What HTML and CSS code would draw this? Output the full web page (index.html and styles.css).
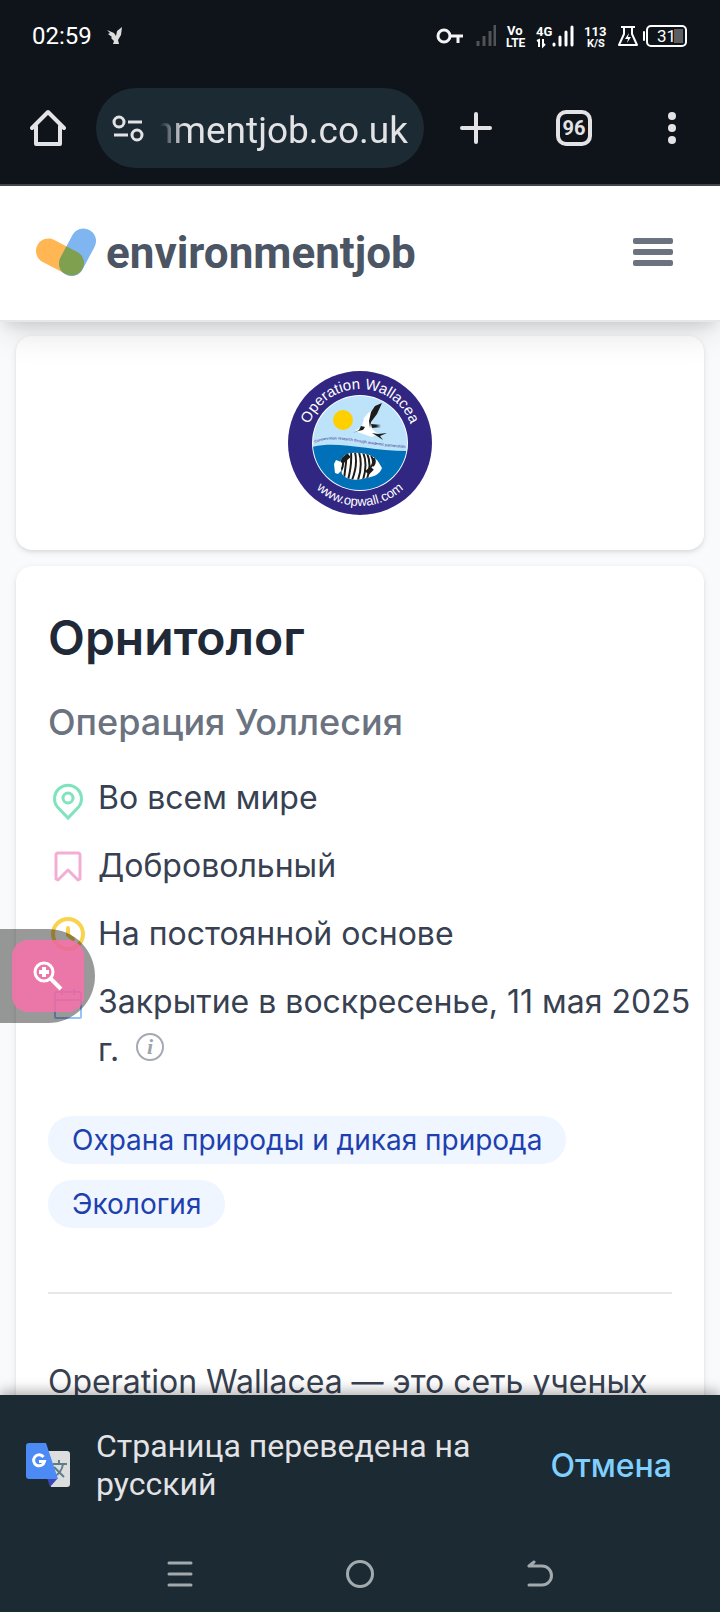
FILE: index.html
```
<!DOCTYPE html>
<html lang="ru">
  <head>
    <meta charset="UTF-8">
    <meta name="viewport" content="width=device-width, initial-scale=1">
    <title>environmentjob</title>
    <link rel="stylesheet" href="styles.css">
  </head>
  <body>
    <div class="browser">
      <div class="status">
        <span class="time">02:59</span>
        <svg class="bird" width="18" height="20" viewBox="0 0 18 20">
          <path fill="#ddd" d="M1 4l7 3 2 3 1-5 5-4-1 8-3 5 1 4H7l1-3-3-3 1-1-4-3 2-1z"/>
        </svg>
        <div class="status-icons">
          <svg width="28" height="24" viewBox="0 0 28 24" fill="none" stroke="#f4f4f4" stroke-width="3">
            <circle cx="8" cy="12" r="6"/>
            <path d="M14 12h13M22 12v7"/>
          </svg>
          <svg width="22" height="24" viewBox="0 0 22 24" stroke="#505357" stroke-width="3">
            <path d="M4 17v5M10 12v10M16 7v15M21 1v21"/>
          </svg>
          <svg width="20" height="24" viewBox="0 0 20 24" class="tiny">
            <text x="1" y="11" font-size="13">Vo</text>
            <text x="0" y="23" font-size="12">LTE</text>
          </svg>
          <svg width="38" height="24" viewBox="0 0 38 24" class="tiny">
            <text x="0" y="12" font-size="13">4G</text>
            <path fill="none" stroke="#fff" stroke-width="2" d="M1 17l2-1v7M7 15v7l2-2"/>
            <path stroke="#fff" stroke-width="3" stroke-linecap="round" d="M18 20v1M24 13v8M30 8v13M36 3v18"/>
          </svg>
          <svg width="24" height="24" viewBox="0 0 24 24" class="tiny">
            <text x="0" y="12" font-size="13">113</text>
            <text x="3" y="23" font-size="11">K/S</text>
          </svg>
          <svg width="20" height="24" viewBox="0 0 20 24">
            <path fill="none" stroke="#fff" stroke-width="2" stroke-linejoin="round" d="M3 3h14M6 3v7L1 21h18l-5-11V3"/>
            <path fill="#fff" d="M11 9l-4 6h3l-1 4 4-6h-3z"/>
          </svg>
          <svg class="battery" width="46" height="24" viewBox="0 0 46 24">
            <path stroke="#fff" stroke-width="2" stroke-linecap="round" d="M2 8v8"/>
            <rect x="5" y="2" width="39" height="20" rx="4" fill="none" stroke="#fff" stroke-width="2"/>
            <rect x="32" y="5" width="9" height="14" fill="#5c5f62"/>
            <text x="15" y="18" font-size="17" fill="#fff">31</text>
          </svg>
        </div>
      </div>
      <div class="toolbar">
        <button class="tool" aria-label="Главная">
          <svg width="36" height="38" viewBox="0 0 36 38" fill="none" stroke="#e3e3e6" stroke-width="4" stroke-linejoin="round" stroke-linecap="round">
            <path d="M2 19L18 3l16 16M6 17v18h24V17"/>
          </svg>
        </button>
        <div class="address">
          <svg width="32" height="28" viewBox="0 0 32 28" fill="none" stroke="#e3e3e6" stroke-width="3">
            <circle cx="7" cy="8" r="5"/>
            <path d="M16 8h14M2 21h14"/>
            <circle cx="25" cy="21" r="5"/>
          </svg>
          <input class="url" type="text" dir="rtl" aria-label="Адрес" value="environmentjob.co.uk">
        </div>
        <div class="tools">
          <button class="tool" aria-label="Новая вкладка">
            <svg width="36" height="36" viewBox="0 0 36 36" stroke="#e3e3e6" stroke-width="4" stroke-linecap="round">
              <path d="M18 4v28M4 18h28"/>
            </svg>
          </button>
          <button class="tool" aria-label="Вкладки"><span class="tabs">96</span></button>
          <button class="tool" aria-label="Меню браузера">
            <svg width="36" height="36" viewBox="0 0 36 36" fill="#e3e3e6">
              <circle cx="18" cy="6" r="4"/><circle cx="18" cy="18" r="4"/><circle cx="18" cy="30" r="4"/>
            </svg>
          </button>
        </div>
      </div>
    </div>

    <header class="header">
      <a class="brand" href="#">
        <svg width="62" height="50" viewBox="0 0 62 50">
          <path stroke="#ffb653" stroke-width="25" stroke-linecap="round" d="M12.500 23L35.500 35"/>
          <path stroke="#7fb5f0" stroke-width="25" stroke-linecap="round" d="M47.500 13L35.500 35.500"/>
          <clipPath id="pill">
            <path d="M18.300 11.900L41.300 23.900A12.500 12.500 0 0 1 29.700 46.100L6.700 34.100A12.500 12.500 0 0 1 18.300 11.900z"/>
          </clipPath>
          <path clip-path="url(#pill)" stroke="#7fa04e" stroke-width="25" stroke-linecap="round" d="M47.500 13L35.500 35.500"/>
        </svg>
        <span>environmentjob</span>
      </a>
      <button class="menu" aria-label="Меню">
        <svg width="40" height="30" viewBox="0 0 40 30" fill="#6b7280">
          <rect width="40" height="6" rx="2"/><rect y="11" width="40" height="6" rx="2"/><rect y="22" width="40" height="6" rx="2"/>
        </svg>
      </button>
    </header>

    <main class="page">
      <section class="card employer">
        <svg class="logo" width="144" height="144" viewBox="0 0 144 144" role="img" aria-label="Operation Wallacea">
          <defs>
            <clipPath id="inner"><circle cx="72" cy="72" r="47"/></clipPath>
            <clipPath id="body"><path d="M52 92C54 83 62 81 70 82C80 82 88 86 91 92L94 97C92 103 86 106 78 107C68 110 58 109 54 103z"/></clipPath>
            <path id="top" d="M18 72A54 54 0 0 1 126 72"/>
            <path id="bottom" d="M8 71A64 64 0 0 0 136 71"/>
            <path id="wave" d="M27 72C48 62 80 76 122 77"/>
          </defs>
          <circle cx="72" cy="72" r="72" fill="#312682"/>
          <circle cx="72" cy="72" r="48" fill="#fff"/>
          <g clip-path="url(#inner)">
            <rect x="20" y="20" width="104" height="104" fill="#bde3fa"/>
            <path fill="#0071b9" d="M20 77C50 68 80 81 124 80V124H20z"/>
          </g>
          <circle cx="55" cy="49" r="10" fill="#ffd000"/>
          <!-- tern -->
          <path fill="#fff" d="M67 60l7-5 2-8 4-5 8-5-5 15 1 6 6 5-6 3-9-3z"/>
          <path fill="#1c1c1a" d="M94 32l-5 11-6 8-1 6-1-7 2-9 4-6zM83 53l10 1-5 1 5 1-9 1zM65 62l6-3 2-4 4 1-2 3-5 1zM84 62l6 1 9-1-7 3 3 4-6-4z"/>
          <!-- angelfish -->
          <path fill="#fff" d="M53 91l-5-2-2 4 1 9 3 1 4-4z"/>
          <path fill="#fff" d="M52 92C54 83 62 81 70 82C80 82 88 86 91 92L94 97C92 103 86 106 78 107C68 110 58 109 54 103z"/>
          <g clip-path="url(#body)" fill="none" stroke="#1c1c1a" stroke-width="2">
            <path d="M54 84q3 8-1 16M59 81q-1 12-3 27M63 81q1 13-3 28M67 81q3 13-3 28M71 81q4 13-1 28M75 81q5 12 0 28M79 82q5 12 0 26M83 84q4 8 0 12M86 87q2 5-1 8"/>
            <path stroke-width="5" d="M53 91l8-7M79 102l5-5"/>
          </g>
          <text font-size="15" fill="#fff" text-anchor="middle"><textPath href="#top" startOffset="50%">Operation Wallacea</textPath></text>
          <text font-size="13" fill="#fff" text-anchor="middle"><textPath href="#bottom" startOffset="50%">www.opwall.com</textPath></text>
          <text font-size="3.800" fill="#312682"><textPath href="#wave">Conservation research through academic partnerships</textPath></text>
        </svg>
      </section>

      <section class="card job">
        <h1>Орнитолог</h1>
        <h2>Операция Уоллесия</h2>
        <ul class="details">
          <li>
            <svg width="40" height="48" viewBox="0 0 40 48" fill="none" stroke="#7fe3bd" stroke-width="3">
              <path d="M20 44L9 32.500A13.500 13.500 0 1 1 31 32.500z"/>
              <circle cx="20" cy="24" r="5"/>
            </svg>
            <span>Во всем мире</span>
          </li>
          <li>
            <svg width="40" height="48" viewBox="0 0 40 48" fill="none" stroke="#f3aed3" stroke-width="3" stroke-linejoin="round">
              <path d="M10 11h20a2 2 0 0 1 2 2v24l-2 1-10-10-10 10-2-1V13a2 2 0 0 1 2-2z"/>
            </svg>
            <span>Добровольный</span>
          </li>
          <li>
            <svg width="40" height="48" viewBox="0 0 40 48" fill="none" stroke="#f9d350" stroke-width="4">
              <circle cx="20" cy="24" r="15"/>
              <path stroke-linecap="round" d="M20 18v7l5 4"/>
            </svg>
            <span>На постоянной основе</span>
          </li>
          <li>
            <svg width="40" height="48" viewBox="0 0 40 48" fill="none" stroke="#93c3f8" stroke-width="2">
              <rect x="7" y="14" width="26" height="26" rx="1"/>
              <path d="M7 22h26M14 11v6M26 11v6"/>
            </svg>
            <span>Закрытие в воскресенье, 11 мая 2025 г.
              <svg class="info" width="28" height="28" viewBox="0 0 28 28">
                <circle cx="14" cy="14" r="13" fill="none" stroke="#a4a9b3" stroke-width="2"/>
                <text x="14" y="21" font-size="22" text-anchor="middle" fill="#9ca3af">i</text>
              </svg>
            </span>
          </li>
        </ul>
        <div class="tags">
          <a href="#">Охрана природы и дикая природа</a>
          <a href="#">Экология</a>
        </div>
        <hr>
        <p>Operation Wallacea — это сеть ученых</p>
      </section>
    </main>

    <footer class="bottom">
      <div class="translate">
        <svg width="44" height="44" viewBox="0 0 44 44">
          <path fill="#dcdddd" d="M20 8h21a3 3 0 0 1 3 3v30a3 3 0 0 1-3 3H25z"/>
          <path fill="#3c46b4" d="M21 35h11l-8 9z"/>
          <path fill="none" stroke="#5f7d88" stroke-width="2" d="M27 21h14M33 17v4M28 24l10 10M37 21q-1 8-9 13"/>
          <path fill="#4c8bf5" d="M3 0h17l12 36H3a3 3 0 0 1-3-3V3a3 3 0 0 1 3-3z"/>
          <path fill="none" stroke="#fff" stroke-width="3" d="M17.500 14A5.500 5.500 0 1 0 18.500 18.500H13"/>
        </svg>
        <span class="message">Страница переведена на русский</span>
        <button class="cancel">Отмена</button>
      </div>
      <nav class="nav">
        <button aria-label="Недавние">
          <svg width="28" height="28" viewBox="0 0 28 28" stroke="#a3aaae" stroke-width="3" stroke-linecap="round"><path d="M3 3h22M3 14h22M3 25h22"/></svg>
        </button>
        <button aria-label="Домой">
          <svg width="28" height="28" viewBox="0 0 28 28" fill="none" stroke="#a3aaae" stroke-width="3"><circle cx="14" cy="14" r="12.500"/></svg>
        </button>
        <button aria-label="Назад">
          <svg width="28" height="28" viewBox="0 0 28 28" fill="none" stroke="#a3aaae" stroke-width="3" stroke-linecap="round" stroke-linejoin="round"><path d="M8 2L3 6h13a9.500 9.500 0 0 1 0 19H3"/></svg>
        </button>
      </nav>
    </footer>

    <div class="magnifier">
      <button aria-label="Увеличить">
        <svg width="32" height="32" viewBox="0 0 32 32" fill="none" stroke="#fff" stroke-width="3">
          <circle cx="12" cy="12" r="9"/>
          <path stroke-width="4" d="M18 18l11 11M12 7v10M7 12h10"/>
        </svg>
      </button>
    </div>
  </body>
</html>
```
FILE: styles.css
```
* {
  box-sizing: border-box;
}
body {
  margin: 0;
  height: 100vh;
  display: flex;
  flex-direction: column;
  overflow: hidden;
  background-color: #f9fafb;
  color: #374151;
  font-family: Inter, "Noto Sans", sans-serif;
}
button {
  padding: 0;
  border: none;
  background: none;
  font-family: inherit;
}
svg {
  display: block;
  flex-shrink: 0;
}

/* browser */
.browser {
  background-color: #0f141a;
  border-bottom: 2px solid #43474c;
  font-family: Roboto, sans-serif;
}
.status {
  display: flex;
  align-items: center;
  height: 72px;
  padding: 0 32px;
}
.time {
  color: #fff;
  font-size: 24px;
}
.bird {
  margin-left: 14px;
}
.status-icons {
  display: flex;
  gap: 10px;
  margin-left: auto;
}
.tiny {
  overflow: visible;
  fill: #fff;
  font-weight: 700;
}
.battery {
  margin-left: -6px;
}
.toolbar {
  display: flex;
  align-items: center;
  padding: 16px 30px;
}
.tool {
  display: flex;
  justify-content: center;
  width: 36px;
}
.address {
  display: flex;
  align-items: center;
  gap: 16px;
  flex: 1;
  min-width: 0;
  height: 80px;
  margin: 0 34px 0 30px;
  padding: 0 16px;
  border-radius: 40px;
  background-color: #1b2a33;
}
.url {
  flex: 1;
  min-width: 0;
  padding: 4px 0 0;
  border: none;
  background: none;
  color: #e3e3e6;
  font-family: inherit;
  font-size: 37px;
  -webkit-mask-image: linear-gradient(to right, transparent, #000 24px);
  mask-image: linear-gradient(to right, transparent, #000 24px);
}
.tools {
  display: flex;
  align-items: center;
  gap: 62px;
}
.tabs {
  width: 36px;
  height: 36px;
  border: 4px solid #e3e3e6;
  border-radius: 10px;
  color: #e3e3e6;
  font-size: 20px;
  font-weight: 700;
  line-height: 28px;
}

/* site header */
.header {
  position: relative;
  z-index: 1;
  display: flex;
  align-items: center;
  justify-content: space-between;
  height: 136px;
  padding: 0 47px 0 36px;
  background-color: #fff;
  border-bottom: 2px solid #e5e7eb;
  box-shadow: 0 20px 30px -6px rgba(0, 0, 0, 0.1), 0 8px 12px -4px rgba(0, 0, 0, 0.1);
}
.brand {
  display: flex;
  align-items: center;
  gap: 8px;
  color: #4b5563;
  font-family: Roboto, sans-serif;
  font-size: 44px;
  font-weight: 700;
  text-decoration: none;
}

/* content */
.page {
  flex: 1;
  min-height: 0;
  display: flex;
  flex-direction: column;
  gap: 16px;
  padding: 14px 16px 0;
  overflow: hidden;
}
.card {
  flex-shrink: 0;
  background-color: #fff;
  border-radius: 16px;
  box-shadow: 0 2px 6px rgba(0, 0, 0, 0.1), 0 2px 4px -2px rgba(0, 0, 0, 0.1);
}
.employer {
  display: flex;
  justify-content: center;
  padding: 35px;
}
.logo {
  font-family: "Liberation Sans", Arial, sans-serif;
}
.job {
  padding: 40px 32px;
}
h1 {
  margin: 0 0 28px;
  color: #1f2937;
  font-size: 48px;
  font-weight: 600;
  line-height: 64px;
}
h2 {
  margin: 0 0 28px;
  color: #6b7280;
  font-size: 36px;
  font-weight: 500;
  line-height: 48px;
}
.details {
  display: flex;
  flex-direction: column;
  gap: 20px;
  margin: 0 -32px 42px 0;
  padding: 0;
  list-style: none;
  font-size: 32px;
  line-height: 48px;
}
.details li {
  display: flex;
  gap: 10px;
}
.info {
  display: inline-block;
  margin-left: 8px;
  font-family: "Liberation Serif", serif;
  font-style: italic;
  font-weight: 700;
}
.tags {
  display: flex;
  flex-wrap: wrap;
  gap: 16px;
}
.tags a {
  padding: 0 24px;
  border-radius: 24px;
  background-color: #eff6ff;
  color: #1e40af;
  font-size: 28px;
  line-height: 48px;
  text-decoration: none;
}
hr {
  margin: 64px 0;
  border: none;
  border-top: 2px solid #e5e7eb;
}
p {
  margin: 0;
  font-size: 32px;
  line-height: 48px;
}

/* bottom bars */
.bottom {
  position: relative;
  background-color: #1b2a33;
  box-shadow: 0 -4px 12px rgba(0, 0, 0, 0.3);
  font-family: Roboto, sans-serif;
}
.translate {
  display: flex;
  align-items: center;
  gap: 26px;
  padding: 32px 48px 32px 26px;
}
.message {
  flex: 1;
  color: #e3e3e6;
  font-size: 32px;
  line-height: 38px;
}
.cancel {
  color: #7fcfff;
  font-family: Inter, sans-serif;
  font-size: 32px;
  font-weight: 500;
}
.nav {
  display: grid;
  grid-template-columns: repeat(3, 1fr);
  height: 77px;
  padding: 0 12.5%;
}
.nav button {
  display: flex;
  align-items: center;
  justify-content: center;
}

/* floating zoom handle */
.magnifier {
  position: fixed;
  z-index: 2;
  left: 0;
  top: 929px;
  padding: 11px 11px 11px 12px;
  border-radius: 0 47px 47px 0;
  background-color: rgba(0, 0, 0, 0.4);
}
.magnifier button {
  display: flex;
  align-items: center;
  justify-content: center;
  width: 72px;
  height: 72px;
  border-radius: 16px;
  background-color: rgba(255, 110, 172, 0.8);
}
```
